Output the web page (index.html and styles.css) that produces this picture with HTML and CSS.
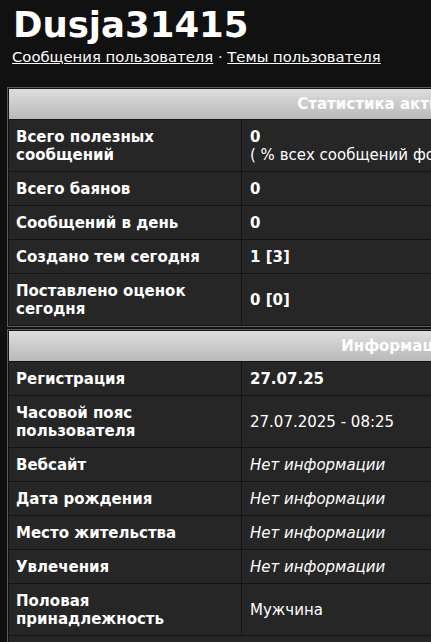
FILE: index.html
```html
<!DOCTYPE html>
<html lang="ru">
<head>
<meta charset="utf-8">
<title>Dusja31415</title>
<link rel="stylesheet" href="styles.css">
</head>
<body>
<div class="page">
  <h1 class="username">Dusja31415</h1>
  <div class="userlinks"><a href="#">Сообщения пользователя</a> · <a href="#">Темы пользователя</a></div>

  <table class="forumline">
    <tr><th colspan="2">Статистика активности</th></tr>
    <tr><td class="label">Всего полезных сообщений</td><td class="val"><b>0</b><br>( % всех сообщений форума)</td></tr>
    <tr><td class="label">Всего баянов</td><td class="val"><b>0</b></td></tr>
    <tr><td class="label">Сообщений в день</td><td class="val"><b>0</b></td></tr>
    <tr><td class="label">Создано тем сегодня</td><td class="val"><b>1 [3]</b></td></tr>
    <tr><td class="label">Поставлено оценок сегодня</td><td class="val"><b>0 [0]</b></td></tr>
  </table>

  <table class="forumline">
    <tr><th colspan="2">Информация</th></tr>
    <tr><td class="label">Регистрация</td><td class="val"><b>27.07.25</b></td></tr>
    <tr><td class="label">Часовой пояс пользователя</td><td class="val">27.07.2025 - 08:25</td></tr>
    <tr><td class="label">Вебсайт</td><td class="val"><i>Нет информации</i></td></tr>
    <tr><td class="label">Дата рождения</td><td class="val"><i>Нет информации</i></td></tr>
    <tr><td class="label">Место жительства</td><td class="val"><i>Нет информации</i></td></tr>
    <tr><td class="label">Увлечения</td><td class="val"><i>Нет информации</i></td></tr>
    <tr><td class="label">Половая принадлежность</td><td class="val">Мужчина</td></tr>
    <tr><td class="full" colspan="2">&nbsp;</td></tr>
  </table>
</div>
</body>
</html>
```
FILE: styles.css
```css
html, body {
  margin: 0;
  padding: 0;
  background: #111111;
  overflow: hidden;
}
.page {
  width: 431px;
  height: 642px;
  overflow: hidden;
  padding: 0 0 0 7px;
  box-sizing: border-box;
  font-family: "DejaVu Sans", Verdana, sans-serif;
  color: #ffffff;
}
.username {
  margin: 0;
  padding: 5px 0 0 6px;
  font-size: 35.5px;
  line-height: 40px;
  font-weight: bold;
  color: #ffffff;
}
.userlinks {
  padding: 3px 0 0 5px;
  font-size: 14.8px;
  line-height: 18px;
  height: 39px;
}
.userlinks a {
  color: #ffffff;
  text-decoration: underline;
}
.forumline {
  width: 781px;
  border: 1px solid #5c5c5c;
  border-spacing: 1px;
  background: #141414;
  margin: 0 0 2px 0;
}
.forumline th {
  height: 30px;
  padding: 0;
  background: linear-gradient(#dddddd, #b9b9b9);
  color: #ffffff;
  font-size: 15px;
  font-weight: bold;
  text-align: center;
}
.forumline td {
  background: #262626;
  font-size: 15px;
  line-height: 18px;
  padding: 8px 8px 7px 8px;
  vertical-align: middle;
}
.forumline td.label {
  width: 217px;
  padding-left: 7px;
  font-weight: bold;
}
```
